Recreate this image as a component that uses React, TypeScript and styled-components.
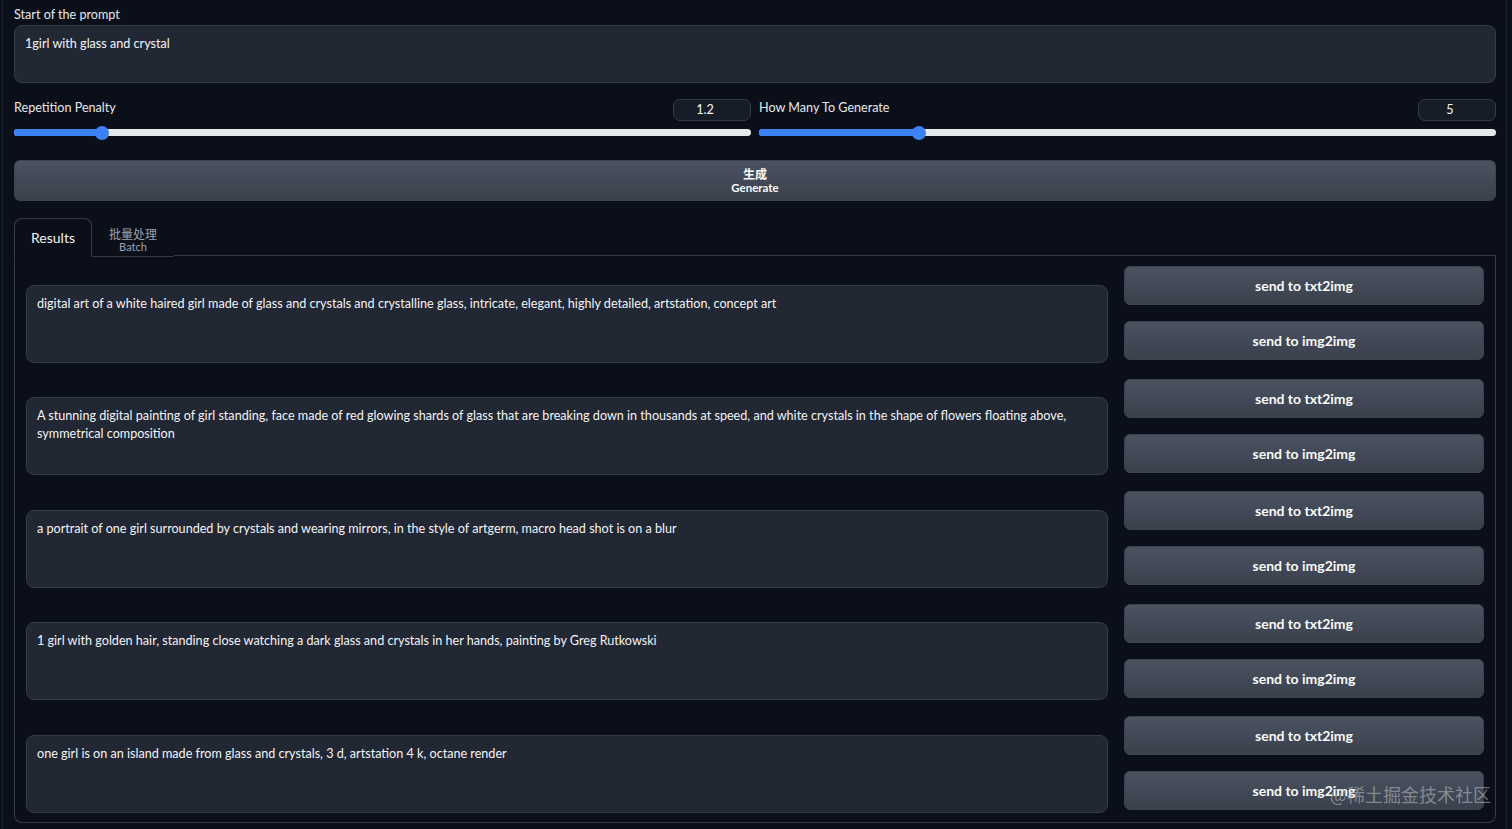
import React from "react";
import styled, { createGlobalStyle } from "styled-components";

const Global = createGlobalStyle`
  html, body { margin: 0; padding: 0; background: #0b0f19; }
  body { font-family: "Lato", "Noto Sans CJK SC", sans-serif; color: #e5e7eb; }
  * { box-sizing: border-box; }
`;

const Page = styled.div`
  position: relative;
  width: 1512px;
  height: 829px;
  overflow: hidden;
  background: #0b0f19;
`;

const Frame = styled.div`
  margin: 0 5px 0 2px;
  border-left: 1px solid #1c2330;
  border-right: 1px solid #1c2330;
  padding: 6px 10px 0 11px;
  display: flex;
  flex-direction: column;
  height: 100%;
`;

const Label = styled.div`
  font-size: 12.6px;
  line-height: 18px;
  color: #e5e7eb;
  margin-bottom: 1px;
`;

const PromptBox = styled.div`
  height: 58px;
  background: #212733;
  border: 1px solid #353c48;
  border-radius: 8px;
  padding: 9px 10px;
  font-size: 12.6px;
  line-height: 18px;
  color: #f3f4f6;
`;

const SliderRow = styled.div`
  display: grid;
  grid-template-columns: 1fr 1fr;
  column-gap: 8px;
  margin-top: 15px;
`;

const SliderBlock = styled.div`
  display: flex;
  flex-direction: column;
`;

const SliderHead = styled.div`
  display: flex;
  justify-content: space-between;
  align-items: center;
  height: 23px;
  & > div:first-child { margin-top: -2px; }
`;

const NumberBox = styled.div`
  width: 78px;
  height: 22px;
  border: 1px solid #353c48;
  background: #171d28;
  border-radius: 7px;
  font-size: 12.6px;
  display: flex;
  align-items: center;
  justify-content: center;
  padding-right: 14px;
  color: #f3f4f6;
`;

const Track = styled.div`
  position: relative;
  margin-top: 8px;
  height: 7px;
  border-radius: 4px;
  background: #e5e7eb;
`;

const Fill = styled.div`
  position: absolute;
  left: 0;
  top: 0;
  bottom: 0;
  border-radius: 4px;
  background: #3b82f6;
`;

const Thumb = styled.div`
  position: absolute;
  top: 50%;
  width: 14px;
  height: 14px;
  margin-left: -7px;
  margin-top: -7px;
  border-radius: 50%;
  background: #3b82f6;
`;

const GenerateButton = styled.div`
  margin-top: 24px;
  height: 41px;
  border-radius: 6px;
  border: 1px solid #3b4250;
  background: linear-gradient(to bottom, #4b5260, #3a414d);
  display: flex;
  flex-direction: column;
  align-items: center;
  justify-content: center;
  color: #f9fafb;
  font-weight: 700;
  font-size: 11.5px;
  line-height: 13px;
  & > span:first-child { font-size: 12px; }
`;

const Tabs = styled.div`
  margin-top: 16px;
  display: flex;
  align-items: flex-end;
  height: 39px;
`;

const Tab = styled.div<{ $active?: boolean }>`
  height: 39px;
  padding: 0 16px;
  display: flex;
  flex-direction: column;
  align-items: center;
  justify-content: center;
  border: 1px solid ${(p) => (p.$active ? "#353c48" : "transparent")};
  border-bottom: ${(p) => (p.$active ? "1px solid #0b0f19" : "1px solid #353c48")};
  border-radius: 8px 8px 0 0;
  margin-bottom: -1px;
  position: relative;
  z-index: 1;
  background: #0b0f19;
  color: ${(p) => (p.$active ? "#f3f4f6" : "#9ca3af")};
  padding-top: ${(p) => (p.$active ? "0" : "6px")};
`;

const TabSub = styled.span`
  font-size: 11px;
  line-height: 12px;
`;

const TabMain = styled.span<{ $big?: boolean }>`
  font-size: ${(p) => (p.$big ? "14px" : "12px")};
  line-height: ${(p) => (p.$big ? "16px" : "13px")};
`;

const TabFill = styled.div`
  flex: 1;
  border-bottom: 1px solid #353c48;
`;

const Panel = styled.div`
  border: 1px solid #353c48;
  border-top: none;
  border-radius: 0 0 8px 8px;
  padding: 10px 11px 9px 11px;
  display: flex;
  flex-direction: column;
  gap: 16px;
`;

const ResultRow = styled.div`
  display: grid;
  grid-template-columns: 1fr 360px;
  column-gap: 16px;
  height: 96.6px;
`;

const ResultText = styled.div`
  margin-top: 18.6px;
  height: 78px;
  background: #212733;
  border: 1px solid #353c48;
  border-radius: 8px;
  padding: 9px 10px;
  font-size: 12.6px;
  line-height: 18px;
  color: #f3f4f6;
`;

const ButtonCol = styled.div`
  display: flex;
  flex-direction: column;
  gap: 16px;
`;

const SendButton = styled.div`
  height: 39px;
  border-radius: 6px;
  border: 1px solid #3b4250;
  background: linear-gradient(to bottom, #4b5260, #3a414d);
  display: flex;
  align-items: center;
  justify-content: center;
  color: #f9fafb;
  font-weight: 700;
  font-size: 14px;
`;

const Watermark = styled.div`
  position: absolute;
  left: 1330px;
  top: 781px;
  font-size: 18px;
  color: rgba(200, 204, 212, 0.5);
  font-family: "Noto Sans CJK SC", sans-serif;
`;

const results = [
  "digital art of a white haired girl made of glass and crystals and crystalline glass, intricate, elegant, highly detailed, artstation, concept art",
  "A stunning digital painting of girl standing, face made of red glowing shards of glass that are breaking down in thousands at speed, and white crystals in the shape of flowers floating above, symmetrical composition",
  "a portrait of one girl surrounded by crystals and wearing mirrors, in the style of artgerm, macro head shot is on a blur",
  "1 girl with golden hair, standing close watching a dark glass and crystals in her hands, painting by Greg Rutkowski",
  "one girl is on an island made from glass and crystals, 3 d, artstation 4 k, octane render",
];

function Slider({ label, value, pct }: { label: string; value: string; pct: number }) {
  return (
    <SliderBlock>
      <SliderHead>
        <Label>{label}</Label>
        <NumberBox>{value}</NumberBox>
      </SliderHead>
      <Track>
        <Fill style={{ width: `${pct}%` }} />
        <Thumb style={{ left: `${pct}%` }} />
      </Track>
    </SliderBlock>
  );
}

export default function App() {
  return (
    <Page>
      <Global />
      <Frame>
        <Label>Start of the prompt</Label>
        <PromptBox>1girl with glass and crystal</PromptBox>
        <SliderRow>
          <Slider label="Repetition Penalty" value="1.2" pct={11.9} />
          <Slider label="How Many To Generate" value="5" pct={21.7} />
        </SliderRow>
        <GenerateButton>
          <span>生成</span>
          <span>Generate</span>
        </GenerateButton>
        <Tabs>
          <Tab $active>
            <TabMain $big>Results</TabMain>
          </Tab>
          <Tab>
            <TabMain>批量处理</TabMain>
            <TabSub>Batch</TabSub>
          </Tab>
          <TabFill />
        </Tabs>
        <Panel>
          {results.map((r, i) => (
            <ResultRow key={i}>
              <ResultText>{r}</ResultText>
              <ButtonCol>
                <SendButton>send to txt2img</SendButton>
                <SendButton>send to img2img</SendButton>
              </ButtonCol>
            </ResultRow>
          ))}
        </Panel>
      </Frame>
      <Watermark>@稀土掘金技术社区</Watermark>
    </Page>
  );
}
